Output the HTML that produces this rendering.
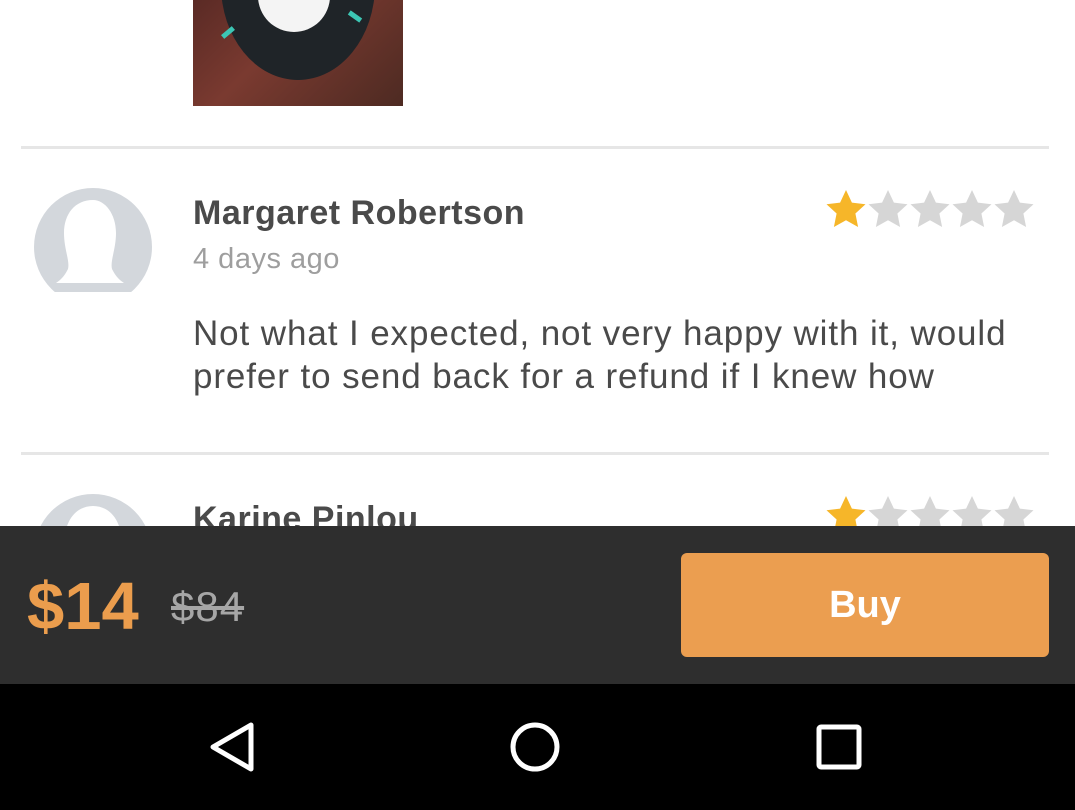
<!DOCTYPE html>
<html><head><style>
body{margin:0;width:1075px;height:810px;overflow:hidden;background:#fff;font-family:"Liberation Sans",Arial,sans-serif;position:relative}
.a{position:absolute}
.name{font-weight:bold;font-size:34px;letter-spacing:0.5px;color:#4a4a4a;left:193px;white-space:nowrap}
.hr{left:21px;width:1028px;height:3px;background:#e6e6e6}
</style></head><body>
<div class="a" style="left:193px;top:0;width:210px;height:106px;background:linear-gradient(135deg,#5a2a25,#7a3a30 40%,#4d2a22);overflow:hidden">
<div class="a" style="left:28px;top:-110px;width:154px;height:190px;border-radius:50%;background:#1f2428"></div>
<div class="a" style="left:65px;top:-40px;width:72px;height:72px;border-radius:50%;background:#f4f4f4"></div>
<div class="a" style="left:28px;top:30px;width:14px;height:5px;background:#3cc6b4;transform:rotate(-40deg)"></div>
<div class="a" style="left:155px;top:14px;width:14px;height:5px;background:#3cc6b4;transform:rotate(35deg)"></div>
</div>
<div class="a hr" style="top:146px"></div>
<svg class="a" style="left:34px;top:188px" width="120" height="106" viewBox="0 0 120 106"><defs><clipPath id="c"><rect width="120" height="104"/></clipPath></defs><g clip-path="url(#c)"><circle cx="59" cy="59" r="59" fill="#d3d7dc"/><path d="M59 12c-18 0-29 14-29 33 0 16 6 28 4 36-3 6-6 10-12 14l68 0c-6-4-9-8-12-14-2-8 4-20 4-36 0-19-11-33-23-33z" fill="#fff"/></g></svg>
<div class="a name" style="top:194px">Margaret Robertson</div>
<div class="a" style="left:193px;top:243px;font-size:29px;letter-spacing:0.5px;color:#9e9e9e">4 days ago</div>
<div class="a" style="left:193px;top:312px;font-size:35px;letter-spacing:0.9px;line-height:43px;color:#4a4a4a;width:850px">Not what I expected, not very happy with it, would prefer to send back for a refund if I knew how</div>
<div class="a hr" style="top:452px"></div>
<svg class="a" style="left:34px;top:494px" width="120" height="40"><circle cx="59" cy="59" r="59" fill="#d3d7dc"/><path d="M59 12c-14 0-25 10-28 28l56 0c-3-18-14-28-28-28z" fill="#fff"/></svg>
<div class="a name" style="top:500px">Karine Pinlou</div>
<svg class="a" width="0" height="0"><defs><path id="s" d="M21 1l5.9 12.6 13.6 1.6-10.1 9.3 2.7 13.5L21 31.2 8.9 38l2.7-13.5L1.5 15.2l13.6-1.6z"/></defs></svg>
<svg class="a" style="left:825px;top:189px" width="215" height="42"><use href="#s" fill="#f6b629"/><use href="#s" x="42" fill="#d6d6d6"/><use href="#s" x="84" fill="#d6d6d6"/><use href="#s" x="126" fill="#d6d6d6"/><use href="#s" x="168" fill="#d6d6d6"/></svg>
<svg class="a" style="left:825px;top:495px" width="215" height="42"><use href="#s" fill="#f6b629"/><use href="#s" x="42" fill="#d6d6d6"/><use href="#s" x="84" fill="#d6d6d6"/><use href="#s" x="126" fill="#d6d6d6"/><use href="#s" x="168" fill="#d6d6d6"/></svg>
<div class="a" style="left:0;top:526px;width:1075px;height:158px;background:#2e2e2e">
<div class="a" style="left:27px;top:42px;font-size:67px;font-weight:bold;color:#eb9d4d">$14</div>
<div class="a" style="left:171px;top:57px;font-size:42px;letter-spacing:1px;color:#a6a6a6;text-decoration:line-through">$84</div>
<div class="a" style="left:681px;top:27px;width:368px;height:104px;border-radius:6px;background:#eb9e50;color:#fff;font-weight:bold;font-size:38px;line-height:104px;text-align:center">Buy</div>
</div>
<div class="a" style="left:0;top:684px;width:1075px;height:126px;background:#000">
<svg class="a" style="left:0;top:0" width="1075" height="126"><path d="M251 41L251 85L213 63Z" fill="none" stroke="#fff" stroke-width="5" stroke-linejoin="round"/><circle cx="535" cy="63" r="22" fill="none" stroke="#fff" stroke-width="5"/><rect x="819" y="43" width="40" height="40" rx="2" fill="none" stroke="#fff" stroke-width="5"/></svg>
</div>
</body></html>
